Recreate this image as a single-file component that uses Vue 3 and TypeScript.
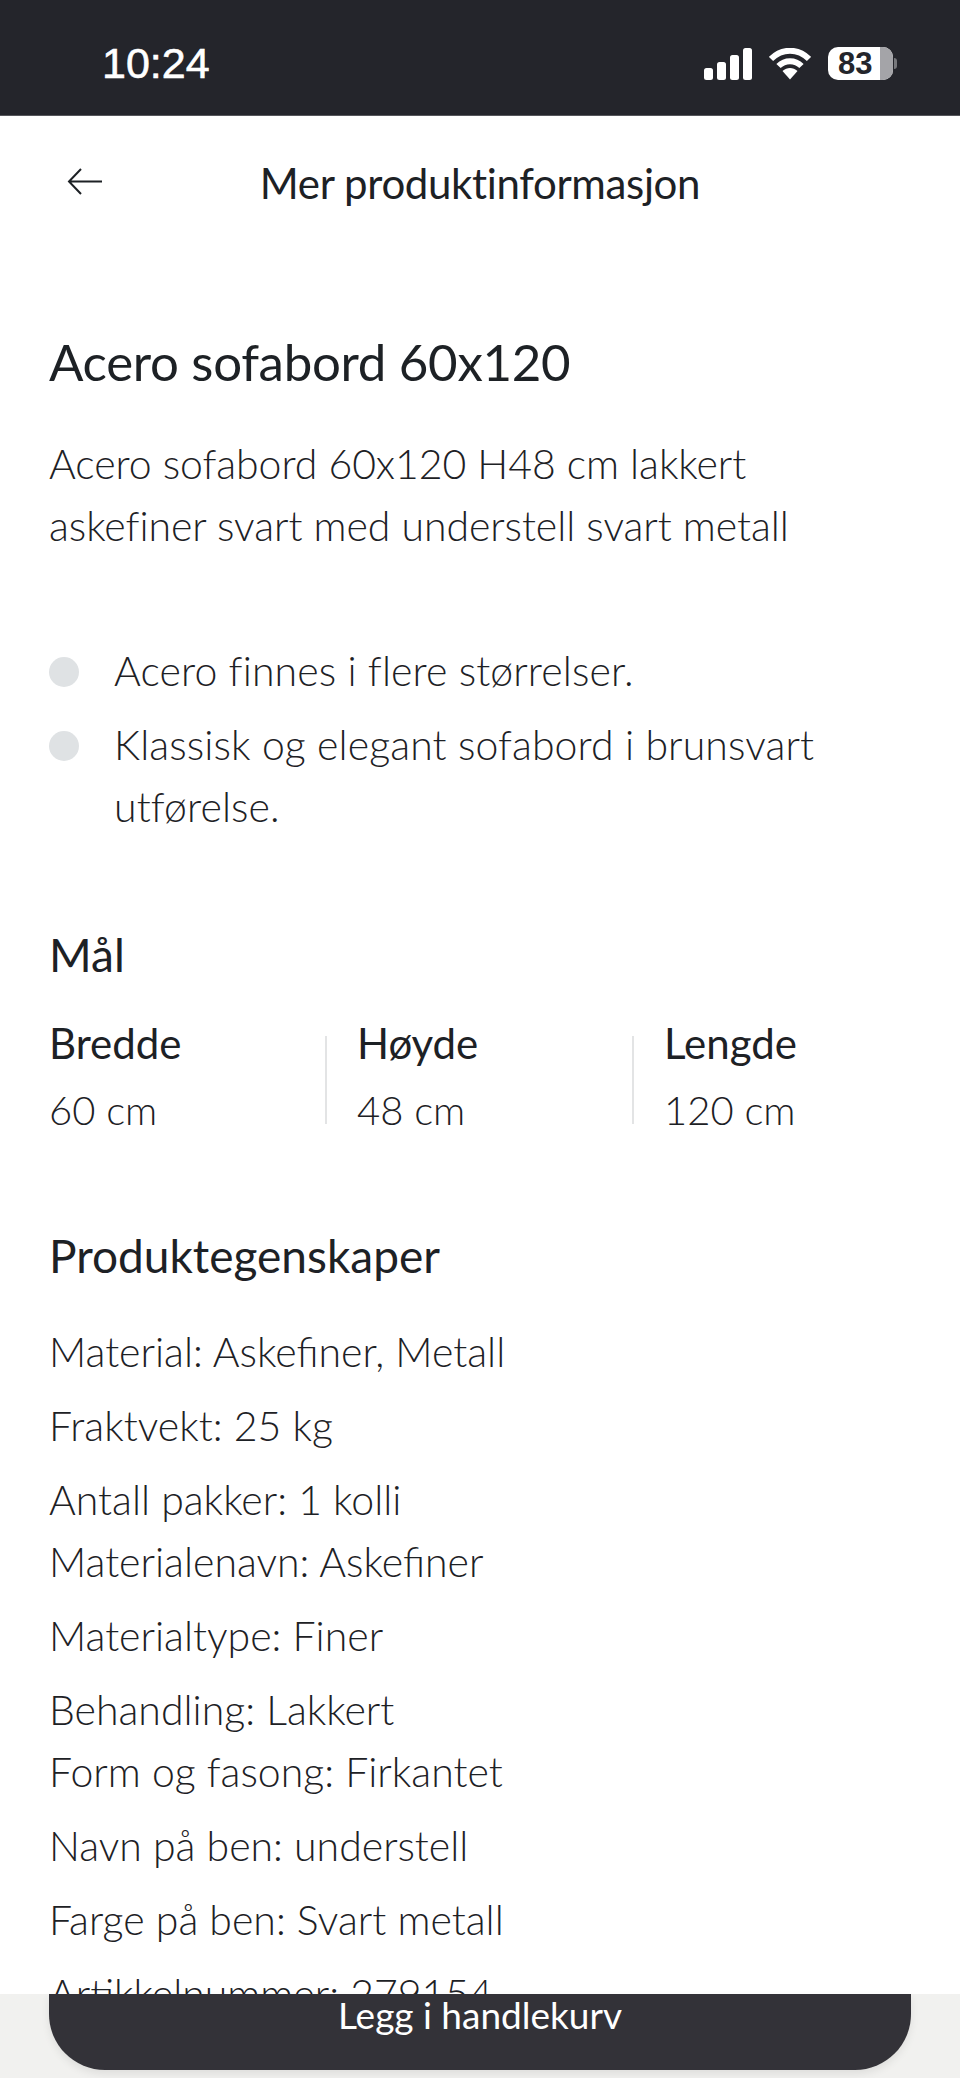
<template>
  <div class="page">
    <div class="status">
      <span class="time">10:24</span>
      <div class="status-icons">
        <svg width="48" height="32" viewBox="0 0 48 32" class="signal">
          <rect x="0" y="20" width="9" height="12" rx="2.5" />
          <rect x="13" y="14" width="9" height="18" rx="2.5" />
          <rect x="26" y="7" width="9" height="25" rx="2.5" />
          <rect x="39" y="0" width="9" height="32" rx="2.5" />
        </svg>
        <svg width="42" height="32" viewBox="0 0 42 32" class="wifi">
          <path d="M2 11 C13 0 29 0 40 11" />
          <path d="M9.5 18 C16 11.5 26 11.5 32.5 18" />
          <path class="wifi-dot" d="M13.5 23 C18 19 24 19 28.5 23 L21 31.5 Z" />
        </svg>
        <div class="battery">
          <div class="battery-body"><span>83</span><i class="battery-rest"></i></div>
          <i class="battery-cap"></i>
        </div>
      </div>
    </div>

    <header class="nav">
      <svg class="back" width="38" height="30" viewBox="0 0 38 30">
        <path d="M36 14.5 H3 M15 2 L3 14.5 L15 27" />
      </svg>
      <div class="nav-title">Mer produktinformasjon</div>
    </header>

    <main class="content">
      <h1>Acero sofabord 60x120</h1>
      <p class="intro">Acero sofabord 60x120 H48 cm lakkert askefiner svart med understell svart metall</p>

      <ul class="bullets">
        <li v-for="b in bullets" :key="b"><i class="dot"></i><span>{{ b }}</span></li>
      </ul>

      <h2 class="dim-title">Mål</h2>
      <div class="dims">
        <div v-for="d in dims" :key="d.label" class="dim">
          <div class="dim-label">{{ d.label }}</div>
          <div class="dim-value">{{ d.value }}</div>
        </div>
      </div>

      <h2 class="props-title">Produktegenskaper</h2>
      <div v-for="(group, i) in props" :key="i" class="prop-group">
        <div v-for="line in group" :key="line">{{ line }}</div>
      </div>
    </main>

    <div class="buy-bar">
      <button class="buy">Legg i handlekurv</button>
    </div>
  </div>
</template>

<script setup lang="ts">
const bullets: string[] = [
  'Acero finnes i flere størrelser.',
  'Klassisk og elegant sofabord i brunsvart utførelse.',
]

const dims = [
  { label: 'Bredde', value: '60 cm' },
  { label: 'Høyde', value: '48 cm' },
  { label: 'Lengde', value: '120 cm' },
]

const props: string[][] = [
  ['Material: Askefiner, Metall'],
  ['Fraktvekt: 25 kg'],
  ['Antall pakker: 1 kolli', 'Materialenavn: Askefiner'],
  ['Materialtype: Finer'],
  ['Behandling: Lakkert', 'Form og fasong: Firkantet'],
  ['Navn på ben: understell'],
  ['Farge på ben: Svart metall'],
  ['Artikkelnummer: 279154'],
]
</script>

<style>
html,
body {
  margin: 0;
  background: #fff;
}
</style>

<style scoped>
.page {
  position: relative;
  width: 960px;
  height: 2078px;
  overflow: hidden;
  background: #fff;
  color: #1d2125;
  font-family: Lato, "Noto Sans", sans-serif;
  font-weight: 300;
}
.status {
  height: 116px;
  box-sizing: border-box;
  padding: 12px 63px 0 102px;
  background: #24252b;
  border-bottom: 1px solid #55565b;
  color: #fff;
  display: flex;
  align-items: center;
  justify-content: space-between;
}
.time {
  font-family: "Liberation Sans", sans-serif;
  font-size: 43px;
  font-weight: 400;
  -webkit-text-stroke: 0.6px #fff;
}
.status-icons {
  display: flex;
  align-items: center;
  gap: 17px;
}
.signal rect {
  fill: #fff;
}
.wifi {
  fill: none;
}
.wifi path {
  stroke: #fff;
  stroke-width: 6;
}
.wifi .wifi-dot {
  fill: #fff;
  stroke: none;
}
.battery {
  display: flex;
  align-items: center;
  gap: 1px;
}
.battery-body {
  position: relative;
  width: 65px;
  height: 33px;
  border-radius: 10px;
  background: #fff;
  overflow: hidden;
  box-sizing: border-box;
  padding-left: 10px;
  line-height: 33px;
  font-family: "Liberation Sans", sans-serif;
  font-size: 31px;
  font-weight: 700;
  color: #24252b;
}
.battery-rest {
  position: absolute;
  top: 0;
  right: 0;
  width: 13px;
  height: 100%;
  background: #a4a4a8;
}
.battery-cap {
  width: 3px;
  height: 11px;
  border-radius: 0 3px 3px 0;
  background: #77787c;
}
.nav {
  position: relative;
  height: 133px;
  box-sizing: border-box;
  padding-top: 39px;
  text-align: center;
}
.back {
  position: absolute;
  left: 66px;
  top: 51px;
  fill: none;
  stroke: #1d2125;
  stroke-width: 2;
}
.nav-title {
  font-size: 42px;
  line-height: 56px;
  font-weight: 400;
  letter-spacing: -0.35px;
  color: #1d2125;
}
.content {
  padding: 0 49px;
  font-size: 41px;
  line-height: 62px;
}
h1 {
  margin: 0;
  padding-top: 82px;
  font-size: 51px;
  line-height: 62px;
  font-weight: 400;
  letter-spacing: -0.3px;
}
.intro {
  margin: 40px 0 0;
  max-width: 800px;
  letter-spacing: -0.05px;
}
.bullets {
  list-style: none;
  margin: 83px 0 0;
  padding: 0;
  letter-spacing: 0.1px;
}
.bullets li {
  display: flex;
  gap: 35px;
  margin-bottom: 12px;
}
.dot {
  flex: none;
  width: 30px;
  height: 30px;
  margin-top: 17px;
  border-radius: 50%;
  background: #dfe2e4;
}
h2 {
  margin: 0;
  font-size: 46px;
  line-height: 62px;
  font-weight: 400;
}
.dim-title {
  margin-top: 86px;
}
.dims {
  display: grid;
  grid-template-columns: 276px 307px 1fr;
  margin-top: 50px;
}
.dim {
  padding-left: 30px;
  border-left: 2px solid #e3e4e5;
  height: 88px;
}
.dim:first-child {
  padding-left: 0;
  border-left: none;
}
.dim-label {
  font-size: 42px;
  line-height: 40px;
  font-weight: 400;
  margin-top: -13px;
}
.dim-value {
  font-size: 40px;
  line-height: 40px;
  margin-top: 27px;
}
.props-title {
  margin-top: 101px;
  margin-bottom: 34px;
}
.prop-group {
  margin-bottom: 12px;
}
.buy-bar {
  position: absolute;
  left: 0;
  right: 0;
  bottom: 0;
  height: 84px;
  background: #f1f1ef;
  padding: 0 49px;
  box-sizing: border-box;
}
.buy {
  display: block;
  width: 100%;
  height: 76px;
  padding: 0 0 34px;
  border: none;
  border-radius: 0 0 56px 56px;
  background: #333238;
  color: #fff;
  font-family: Lato, "Noto Sans", sans-serif;
  font-size: 37px;
  font-weight: 400;
  line-height: 42px;
  box-shadow: 0 4px 8px rgba(0, 0, 0, 0.08);
}
</style>
